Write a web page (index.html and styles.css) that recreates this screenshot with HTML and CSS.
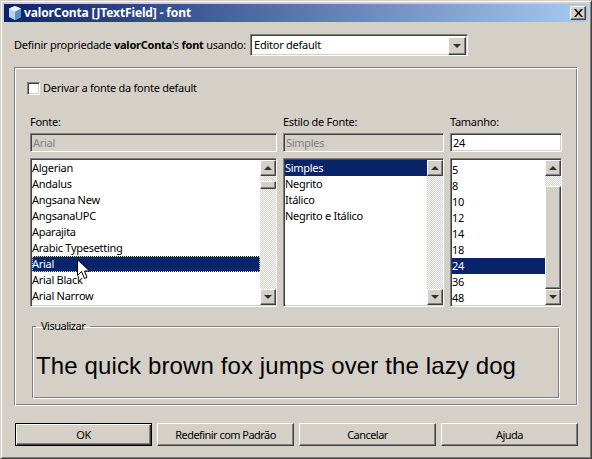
FILE: index.html
```html
<!DOCTYPE html>
<html lang="pt">
<head>
<meta charset="utf-8">
<title>valorConta [JTextField] - font</title>
<link rel="stylesheet" href="styles.css">
</head>
<body>
<div class="window">
  <header class="titlebar">
    <svg class="app-icon" width="14" height="14" viewBox="0 0 14 14">
      <path d="M7 0 13 2.500V11L7 14 1 11V2.500Z" fill="#b9d3ee"/>
      <path d="M7 5.500 13 2.500V11L7 14Z" fill="#5f8fc4"/>
      <path d="M7 0 13 2.500 7 5.500 1 2.500Z" fill="#e8f2fb"/>
    </svg>
    <span class="title">valorConta [JTextField] - font</span>
    <button class="close" aria-label="Fechar">
      <svg width="9" height="8" viewBox="0 0 9 8"><path d="M0 0H2L4.500 3 7 0H9L5.500 4 9 8H7L4.500 5 2 8H0L3.500 4Z" fill="#000"/></svg>
    </button>
  </header>
  <main class="content">
    <div class="using-row">
      <span>Definir propriedade <b>valorConta</b>'s <b>font</b> usando:</span>
      <div class="combo sunken">
        <span class="combo-value">Editor default</span>
        <span class="sb-btn combo-btn"><i class="arrow down"></i></span>
      </div>
    </div>
    <section class="panel">
      <label class="check-row"><span class="check sunken"></span>Derivar a fonte da fonte default</label>
      <div class="font-grid">
        <span class="col-label">Fonte:</span>
        <span class="col-label">Estilo de Fonte:</span>
        <span class="col-label">Tamanho:</span>
        <div class="field sunken disabled">Arial</div>
        <div class="field sunken disabled">Simples</div>
        <div class="field sunken">24</div>
        <div class="list sunken">
          <ul>
            <li>Algerian</li><li>Andalus</li><li>Angsana New</li><li>AngsanaUPC</li><li>Aparajita</li><li>Arabic Typesetting</li><li class="sel focus">Arial</li><li>Arial Black</li><li>Arial Narrow</li>
          </ul>
          <div class="scrollbar">
            <span class="sb-btn"><i class="arrow up"></i></span>
            <span class="track"></span><span class="thumb thumb-font"></span><span class="track grow"></span>
            <span class="sb-btn"><i class="arrow down"></i></span>
          </div>
        </div>
        <div class="list sunken">
          <ul>
            <li class="sel">Simples</li><li>Negrito</li><li>Itálico</li><li>Negrito e Itálico</li>
          </ul>
          <div class="scrollbar">
            <span class="sb-btn"><i class="arrow up"></i></span>
            <span class="track grow"></span>
            <span class="sb-btn"><i class="arrow down"></i></span>
          </div>
        </div>
        <div class="list sunken">
          <ul class="sizes">
            <li>5</li><li>8</li><li>10</li><li>12</li><li>14</li><li>18</li><li class="sel">24</li><li>36</li><li>48</li>
          </ul>
          <div class="scrollbar">
            <span class="sb-btn"><i class="arrow up"></i></span>
            <span class="track track-size"></span><span class="thumb grow"></span>
            <span class="sb-btn"><i class="arrow down"></i></span>
          </div>
        </div>
      </div>
      <fieldset class="preview">
        <legend>Visualizar</legend>
        <p>The quick brown fox jumps over the lazy dog</p>
      </fieldset>
    </section>
    <footer class="buttons">
      <button class="btn default">OK</button>
      <button class="btn">Redefinir com Padrão</button>
      <button class="btn">Cancelar</button>
      <button class="btn">Ajuda</button>
    </footer>
  </main>
  <svg class="cursor" width="13" height="21" viewBox="0 0 13 21">
    <path d="M.5.5V16.500L4.500 12.500 7.500 19.500 10 18.500 7.500 12H12.500Z" fill="#fff" stroke="#000"/>
  </svg>
</div>
</body>
</html>
```
FILE: styles.css
```css
* { box-sizing: border-box; }
html, body { margin: 0; padding: 0; }
body {
  width: 592px;
  height: 459px;
  overflow: hidden;
  font: 11px/16px "Noto Sans", "DejaVu Sans", sans-serif;
  letter-spacing: -0.28px;
  color: #000;
  background: #d4d0c8;
}
.window {
  position: relative;
  width: 592px;
  height: 459px;
  padding: 3px;
  background: #d4d0c8;
  border: 1px solid;
  border-color: #d4d0c8 #404040 #404040 #d4d0c8;
  box-shadow: inset 1px 1px #fff, inset -1px -1px #808080;
  display: flex;
  flex-direction: column;
}
.titlebar {
  height: 18px;
  flex: none;
  display: flex;
  align-items: center;
  padding: 0 2px 0 4px;
  background: linear-gradient(90deg, #0a246a, #a6caf0);
  color: #fff;
  font-weight: 700;
  font-size: 12px;
  letter-spacing: -0.13px;
}
.app-icon { flex: none; margin-right: 2px; }
.title { flex: 1; }
.close {
  width: 16px;
  height: 14px;
  padding: 0;
  display: flex;
  align-items: center;
  justify-content: center;
  background: #d4d0c8;
  border: 1px solid;
  border-color: #fff #404040 #404040 #fff;
  box-shadow: inset -1px -1px #808080;
}
.content {
  flex: 1;
  display: flex;
  flex-direction: column;
  padding: 12px 10px 0;
}
.sunken {
  border: 1px solid;
  border-color: #808080 #fff #fff #808080;
  box-shadow: inset 1px 1px #404040, inset -1px -1px #d4d0c8;
}
.using-row {
  display: flex;
  align-items: center;
  height: 21px;
  gap: 5px;
}
.using-row span:first-child { width: 231px; white-space: nowrap; letter-spacing: -0.24px; }
.combo {
  width: 218px;
  height: 22px;
  display: flex;
  align-items: stretch;
  padding: 2px 1px 2px 2px;
  background: #fff;
}
.combo-value { flex: 1; padding-left: 1px; }
.sb-btn {
  display: flex;
  flex: none;
  align-items: center;
  justify-content: center;
  width: 16px;
  height: 16px;
  background: #d4d0c8;
  border: 1px solid;
  border-color: #fff #404040 #404040 #fff;
  box-shadow: inset -1px -1px #808080;
}
.combo-btn { height: 18px; width: 18px; }
.arrow { width: 0; height: 0; border-left: 4px solid transparent; border-right: 4px solid transparent; }
.arrow.down { border-top: 4px solid #303030; }
.arrow.up { border-bottom: 4px solid #303030; }
.panel {
  margin-top: 12px;
  height: 339px;
  width: 564px;
  border: 1px solid;
  border-color: #808080 #fff #fff #808080;
  box-shadow: inset 1px 1px #fff, inset -1px -1px #808080;
  padding: 13px 15px 0;
}
.check-row { display: flex; align-items: center; height: 14px; gap: 3px; margin-left: -3px; }
.check { width: 13px; height: 13px; background: #fff; }
.font-grid {
  margin-top: 19px;
  display: grid;
  grid-template-columns: 247px 161px 112px;
  grid-template-rows: 16px 22px 155px;
  column-gap: 6px;
}
.col-label { align-self: start; }
.field {
  margin-top: 3px;
  height: 19px;
  padding: 1px 2px;
  background: #fff;
  line-height: 16px;
}
.field.disabled { background: #d4d0c8; color: #808080; }
.list {
  margin-top: 6px;
  height: 149px;
  display: flex;
  padding: 1px 0 1px 1px;
  background: #fff;
}
.list ul { flex: 1; margin: 0; padding: 0; list-style: none; overflow: hidden; }
.list ul.sizes { padding-top: 2px; }
.list li { height: 16px; white-space: nowrap; }
.list li.sel { background: #0a246a; color: #fff; }
.list li.focus { outline: 1px dotted #e8d890; outline-offset: -1px; }
.scrollbar { display: flex; flex-direction: column; width: 16px; flex: none; }
.track { display: block; background: repeating-conic-gradient(#fff 0 25%, #d4d0c8 0 50%) 0 0 / 2px 2px; height: 5px; flex: none; }
.track.grow, .thumb.grow { flex: 1; height: auto; }
.track-size { height: 10px; }
.thumb {
  display: block;
  background: #d4d0c8;
  border: 1px solid;
  border-color: #fff #404040 #404040 #fff;
  box-shadow: inset -1px -1px #808080;
}
.thumb-font { height: 8px; flex: none; }
.preview {
  margin: 11px 0 0 2px;
  padding: 0 0 0 3px;
  width: 528px;
  height: 81px;
  border: 1px solid;
  border-color: #808080 #fff #fff #808080;
  box-shadow: inset 1px 1px #fff, inset -1px -1px #808080;
}
.preview legend { padding: 0 5px; margin-left: 0; height: 16px; letter-spacing: -0.5px; }
.preview p {
  margin: 17px 0 0;
  font: 24px/30px "Liberation Sans", Arial, sans-serif;
  letter-spacing: 0.12px;
  white-space: nowrap;
}
.buttons {
  display: grid;
  grid-template-columns: repeat(4, 137px);
  column-gap: 5px;
  margin-top: 17px;
  margin-left: 1px;
}
.btn {
  height: 23px;
  padding: 0;
  font: inherit;
  letter-spacing: -0.55px;
  color: #000;
  background: #d4d0c8;
  border: 1px solid;
  border-color: #fff #404040 #404040 #fff;
  box-shadow: inset -1px -1px #808080;
}
.btn.default {
  border-color: #000;
  box-shadow: inset 1px 1px #fff, inset -1px -1px #404040, inset -2px -2px #808080;
}
.cursor { position: absolute; left: 76px; top: 258px; }
```
